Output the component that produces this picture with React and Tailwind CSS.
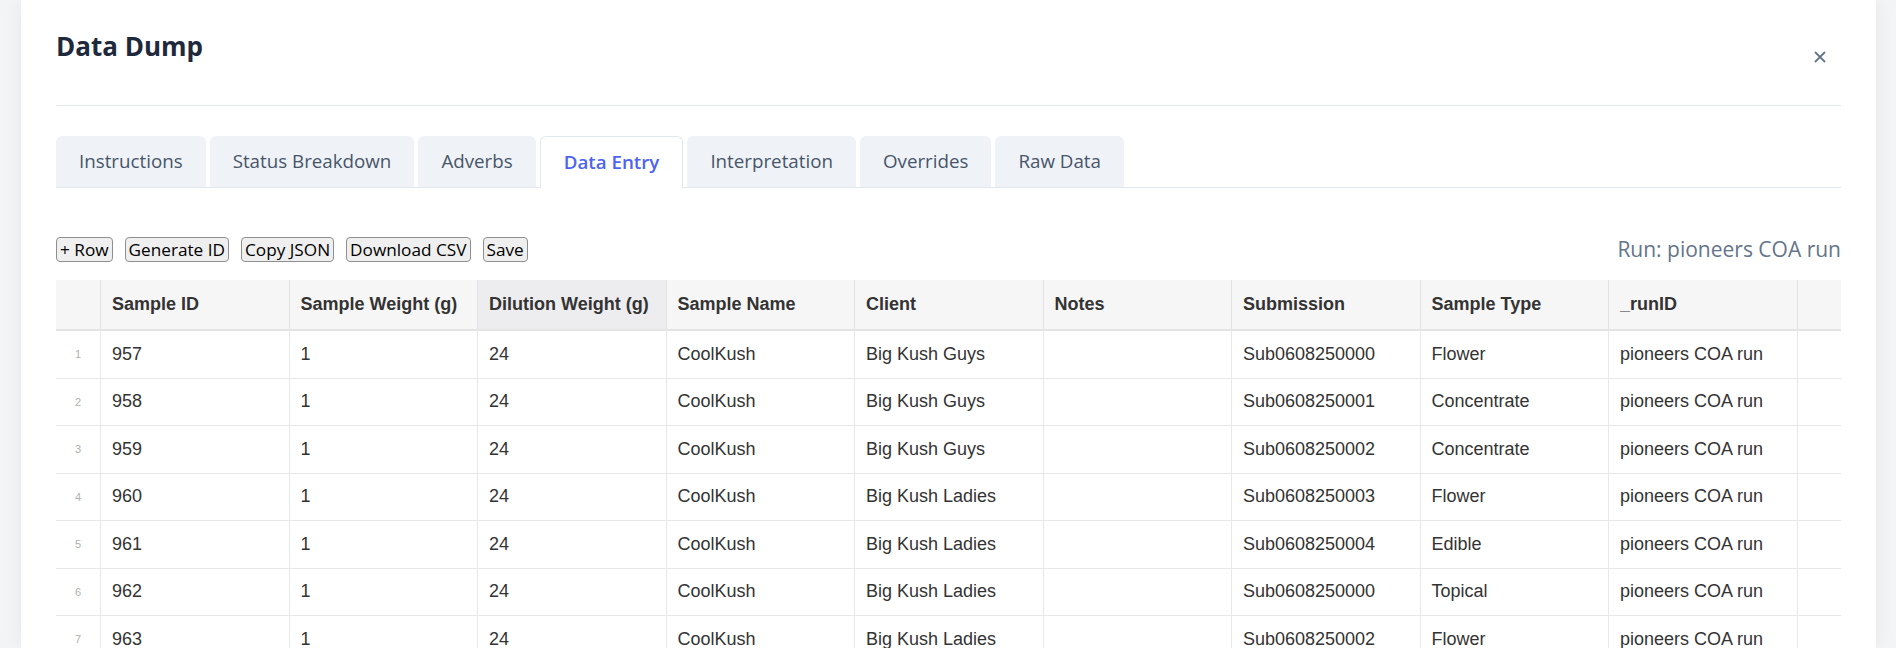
// App.jsx - Data Dump modal, Data Entry tab
const TABS = ['Instructions', 'Status Breakdown', 'Adverbs', 'Data Entry', 'Interpretation', 'Overrides', 'Raw Data'];
const ACTIVE_TAB = 'Data Entry';

const BUTTONS = ['+ Row', 'Generate ID', 'Copy JSON', 'Download CSV', 'Save'];

const COLUMNS = [
  'Sample ID',
  'Sample Weight (g)',
  'Dilution Weight (g)',
  'Sample Name',
  'Client',
  'Notes',
  'Submission',
  'Sample Type',
  '_runID',
];

const ROWS = [
  ['957', '1', '24', 'CoolKush', 'Big Kush Guys', '', 'Sub0608250000', 'Flower', 'pioneers COA run'],
  ['958', '1', '24', 'CoolKush', 'Big Kush Guys', '', 'Sub0608250001', 'Concentrate', 'pioneers COA run'],
  ['959', '1', '24', 'CoolKush', 'Big Kush Guys', '', 'Sub0608250002', 'Concentrate', 'pioneers COA run'],
  ['960', '1', '24', 'CoolKush', 'Big Kush Ladies', '', 'Sub0608250003', 'Flower', 'pioneers COA run'],
  ['961', '1', '24', 'CoolKush', 'Big Kush Ladies', '', 'Sub0608250004', 'Edible', 'pioneers COA run'],
  ['962', '1', '24', 'CoolKush', 'Big Kush Ladies', '', 'Sub0608250000', 'Topical', 'pioneers COA run'],
  ['963', '1', '24', 'CoolKush', 'Big Kush Ladies', '', 'Sub0608250002', 'Flower', 'pioneers COA run'],
  ['964', '1', '24', 'CoolKush', 'Big Kush Ladies', '', 'Sub0608250003', 'Flower', 'pioneers COA run'],
];

export default function App() {
  return (
    <div className="w-[1896px] h-[648px] overflow-hidden bg-[#f3f4f6] font-['Open_Sans',sans-serif]">
      <div className="ml-[21px] w-[1855px] h-full bg-white px-[35px] pt-[30px] shadow-[0_0_18px_rgba(15,23,42,0.06)]">
        {/* En-tête */}
        <div className="flex items-start justify-between h-[76px] border-b border-[#e2e8f0]">
          <h1 className="text-[26px] leading-[32px] font-bold text-[#1e293b]">Data Dump</h1>
          <button className="mt-[21px] mr-[15px] text-[#64748b]">
            <svg width="12" height="12" viewBox="0 0 12 12" fill="none" stroke="currentColor" strokeWidth="1.8" strokeLinecap="round">
              <path d="M1.5 1.5L10.5 10.5M10.5 1.5L1.5 10.5" />
            </svg>
          </button>
        </div>

        {/* Onglets */}
        <div className="mt-[30px] flex items-end gap-[4px] border-b border-[#e2e8f0]">
          {TABS.map(tab =>
            tab === ACTIVE_TAB ? (
              <div key={tab}
                className="h-[52px] -mb-px px-[23px] flex items-center rounded-t-[6px] border border-b-0 border-[#e2e8f0] bg-white text-[18.75px] font-semibold text-[#4c64f0]">
                {tab}
              </div>
            ) : (
              <div key={tab}
                className="h-[51px] px-[23px] flex items-center rounded-t-[6px] bg-[#eff3f8] text-[18.75px] text-[#475569]">
                {tab}
              </div>
            )
          )}
        </div>

        {/* Barre d'outils */}
        <div className="mt-[49px] flex items-center justify-between h-[25px]">
          <div className="flex items-center gap-[12px]">
            {BUTTONS.map(b => (
              <button key={b}
                className="h-[25px] px-[3px] rounded-[4px] border border-[#8f8f8f] bg-[#efefef] text-[17.2px] leading-[22px] text-black">
                {b}
              </button>
            ))}
          </div>
          <span className="text-[21px] text-[#64748b]">Run: pioneers COA run</span>
        </div>

        {/* Tableau */}
        <div className="mt-[18px] w-[1785px] overflow-hidden font-['Liberation_Sans',Arial,sans-serif] text-[18px] text-[#333333]">
          <div className="flex w-max h-[51px] bg-[#f6f6f6] border-b-2 border-[#e4e4e4]">
            <div className="w-[44px] shrink-0" />
            {COLUMNS.map(col => (
              <div key={col}
                className={`w-[188.5px] shrink-0 border-l border-[#e2e2e2] pl-[11px] flex items-center font-bold ${col === 'Dilution Weight (g)' ? 'bg-[#ededef]' : ''}`}>
                {col}
              </div>
            ))}
            <div className="w-[188.5px] shrink-0 border-l border-[#e2e2e2]" />
          </div>
          {ROWS.map((row, i) => (
            <div key={i} className="flex w-max h-[47.5px] border-b border-[#e8e8e8]">
              <div className="w-[44px] shrink-0 flex items-center justify-center text-[11px] text-[#b0b0b0]">{i + 1}</div>
              {row.map((cell, j) => (
                <div key={j} className="w-[188.5px] shrink-0 border-l border-[#e8e8e8] pl-[11px] flex items-center whitespace-nowrap">
                  {cell}
                </div>
              ))}
              <div className="w-[188.5px] shrink-0 border-l border-[#e8e8e8]" />
            </div>
          ))}
        </div>
      </div>
    </div>
  );
}
